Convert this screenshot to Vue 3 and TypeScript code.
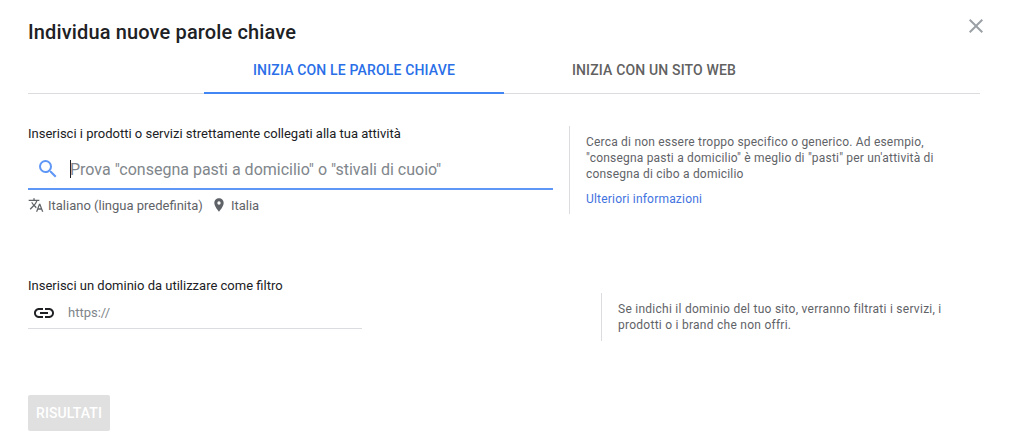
<script setup lang="ts">
const tabs = [
  { label: 'Inizia con le parole chiave', active: true },
  { label: 'Inizia con un sito web', active: false },
];
</script>

<template>
  <div class="dialog">
    <header class="head">
      <h1 class="title">Individua nuove parole chiave</h1>
      <button class="close" aria-label="Chiudi">
        <svg width="24" height="24" viewBox="0 0 24 24">
          <path d="M19 6.41 17.59 5 12 10.59 6.41 5 5 6.41 10.59 12 5 17.59 6.41 19 12 13.41 17.59 19 19 17.59 13.41 12z" fill="#9aa0a6" />
        </svg>
      </button>
    </header>

    <nav class="tabs">
      <div v-for="tab in tabs" :key="tab.label" class="tab" :class="{ active: tab.active }">{{ tab.label }}</div>
    </nav>

    <section class="row keywords">
      <div class="main">
        <label class="label">Inserisci i prodotti o servizi strettamente collegati alla tua attività</label>
        <div class="search">
          <svg class="search-icon" width="24" height="24" viewBox="0 0 24 24">
            <path d="M15.5 14h-.79l-.28-.27A6.47 6.47 0 0 0 16 9.5 6.5 6.5 0 1 0 9.5 16c1.61 0 3.09-.59 4.23-1.57l.27.28v.79l5 4.99L20.49 19l-4.99-5zm-6 0C7.01 14 5 11.99 5 9.5S7.01 5 9.5 5 14 7.01 14 9.5 11.99 14 9.5 14z" fill="#5e97f6" />
          </svg>
          <span class="caret"></span>
          <span class="placeholder">Prova "consegna pasti a domicilio" o "stivali di cuoio"</span>
        </div>
        <div class="meta">
          <svg width="16" height="16" viewBox="0 0 24 24">
            <path d="m12.87 15.07-2.54-2.51.03-.03A17.52 17.52 0 0 0 14.07 6H17V4h-7V2H8v2H1v1.99h11.17C11.5 7.92 10.44 9.75 9 11.35 8.07 10.32 7.3 9.19 6.69 8h-2c.73 1.63 1.73 3.17 2.98 4.56l-5.09 5.02L4 19l5-5 3.11 3.11.76-2.04zM18.5 10h-2L12 22h2l1.12-3h4.75L21 22h2l-4.5-12zm-2.62 7 1.62-4.33L19.12 17h-3.24z" fill="#5f6368" />
          </svg>
          <span class="meta-text">Italiano (lingua predefinita)</span>
          <svg class="pin" width="16" height="16" viewBox="0 0 24 24">
            <path d="M12 2C8.13 2 5 5.13 5 9c0 5.25 7 13 7 13s7-7.75 7-13c0-3.87-3.13-7-7-7zm0 9.5a2.5 2.5 0 1 1 0-5 2.5 2.5 0 0 1 0 5z" fill="#5f6368" />
          </svg>
          <span class="meta-text">Italia</span>
        </div>
      </div>
      <aside class="help">
        <p>Cerca di non essere troppo specifico o generico. Ad esempio, "consegna pasti a domicilio" è meglio di "pasti" per un'attività di consegna di cibo a domicilio</p>
        <a class="more">Ulteriori informazioni</a>
      </aside>
    </section>

    <section class="row domain">
      <div class="main">
        <label class="label">Inserisci un dominio da utilizzare come filtro</label>
        <div class="url">
          <svg width="24" height="24" viewBox="0 0 24 24">
            <path d="M3.9 12c0-1.71 1.39-3.1 3.1-3.1h4V7H7c-2.76 0-5 2.24-5 5s2.24 5 5 5h4v-1.9H7c-1.71 0-3.1-1.39-3.1-3.1zM8 13h8v-2H8v2zm9-6h-4v1.9h4c1.71 0 3.1 1.39 3.1 3.1s-1.39 3.1-3.1 3.1h-4V17h4c2.76 0 5-2.24 5-5s-2.24-5-5-5z" fill="#202124" />
          </svg>
          <span class="url-text">https://</span>
        </div>
      </div>
      <aside class="help">
        <p>Se indichi il dominio del tuo sito, verranno filtrati i servizi, i prodotti o i brand che non offri.</p>
      </aside>
    </section>

    <button class="submit" disabled>Risultati</button>
  </div>
</template>

<style>
html,
body {
  margin: 0;
  background: #fff;
}
</style>

<style scoped>
.dialog {
  box-sizing: border-box;
  width: 1010px;
  height: 440px;
  padding: 0 30px 0 28px;
  overflow: hidden;
  font-family: Roboto, "Liberation Sans", sans-serif;
  color: #202124;
}

.head {
  display: flex;
  align-items: center;
  justify-content: space-between;
  height: 46px;
  padding-top: 18px;
  box-sizing: border-box;
}

.title {
  margin: 0;
  font-size: 20px;
  font-weight: 500;
  letter-spacing: 0.14px;
  color: #202124;
}

.close {
  width: 24px;
  height: 24px;
  padding: 0;
  margin-right: -8px;
  margin-top: -12px;
  border: 0;
  background: none;
}

.tabs {
  display: flex;
  justify-content: center;
  height: 48px;
  box-sizing: border-box;
  border-bottom: 1px solid #dadce0;
}

.tab {
  width: 300px;
  height: 47px;
  box-sizing: border-box;
  padding-top: 16px;
  line-height: 16px;
  text-align: center;
  font-size: 14px;
  font-weight: 500;
  letter-spacing: 0.16px;
  text-transform: uppercase;
  color: #616161;
}

.tab.active {
  color: #2a6fe8;
  border-bottom: 2px solid #4285f4;
  height: 48px;
}

.row {
  display: flex;
}

.keywords {
  margin-top: 32px;
}

.domain {
  margin-top: 64px;
}

.label {
  display: block;
  font-size: 13px;
  line-height: 16px;
  color: #202124;
}

.keywords .main {
  width: 525px;
  margin-right: 16px;
}

.domain .main {
  width: 334px;
  margin-right: 239px;
}

.search {
  display: flex;
  align-items: center;
  height: 44px;
  box-sizing: border-box;
  padding-top: 4px;
  padding-left: 8px;
  border-bottom: 2px solid #5e97f6;
  margin-top: 4px;
}

.search-icon {
  flex: none;
}

.caret {
  width: 1px;
  height: 18px;
  margin-left: 10px;
  margin-right: -1px;
  background: #202124;
}

.placeholder {
  font-size: 16px;
  color: #80868b;
}

.meta {
  display: flex;
  align-items: center;
  height: 16px;
  margin-top: 7px;
  font-size: 13px;
  color: #5f6368;
}

.meta-text {
  margin-left: 4px;
}

.pin {
  margin-left: 8px;
}

.url {
  display: flex;
  align-items: center;
  height: 30px;
  box-sizing: border-box;
  padding-left: 4px;
  padding-bottom: 2px;
  border-bottom: 1px solid #dadce0;
  margin-top: 5px;
}

.url-text {
  margin-left: 12px;
  font-size: 13px;
  color: #80868b;
}

.help {
  box-sizing: border-box;
  padding-left: 16px;
  border-left: 1px solid #dadce0;
  font-size: 12px;
  line-height: 16px;
  letter-spacing: 0.2px;
  color: #5f6368;
}

.keywords .help {
  width: 411px;
  height: 88px;
  padding-top: 8px;
}

.domain .help {
  width: 378px;
  height: 48px;
  margin-top: 15px;
  padding-top: 8px;
  letter-spacing: 0.26px;
}

.help p {
  margin: 0;
}

.more {
  display: block;
  margin-top: 9px;
  color: #3f73e0;
}

.submit {
  display: block;
  width: 82px;
  height: 36px;
  margin-top: 54px;
  padding: 0;
  border: 0;
  border-radius: 2px;
  background: #e0e0e0;
  color: #fff;
  font-family: inherit;
  font-size: 14px;
  font-weight: 500;
  letter-spacing: 0.1px;
  text-transform: uppercase;
}
</style>
